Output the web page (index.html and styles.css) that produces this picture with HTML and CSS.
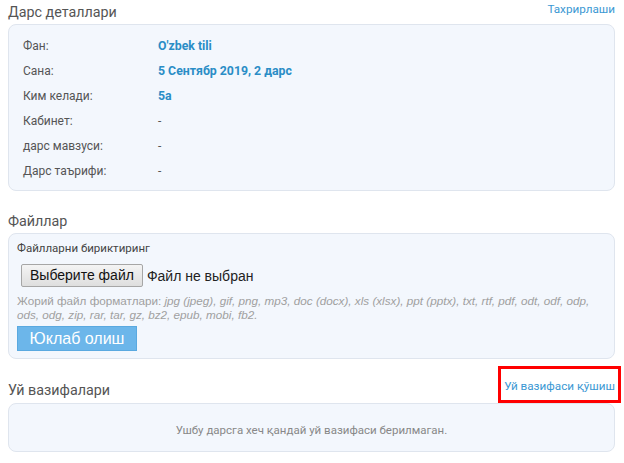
FILE: index.html
```html
<!DOCTYPE html>
<html lang="uz">
<head>
<meta charset="utf-8">
<title>Дарс деталлари</title>
<link rel="stylesheet" href="styles.css">
</head>
<body>
<div class="page">
  <div class="sec-head first">
    <h2 class="sec-title">Дарс деталлари</h2>
    <a class="link edit" href="#">Тахрирлаши</a>
  </div>
  <div class="card details">
    <div class="row"><span class="label">Фан:</span><span class="value strong">O'zbek tili</span></div>
    <div class="row"><span class="label">Сана:</span><span class="value strong">5 Сентябр 2019, 2 дарс</span></div>
    <div class="row"><span class="label">Ким келади:</span><span class="value strong">5a</span></div>
    <div class="row"><span class="label">Кабинет:</span><span class="value">-</span></div>
    <div class="row"><span class="label">дарс мавзуси:</span><span class="value">-</span></div>
    <div class="row"><span class="label">Дарс таърифи:</span><span class="value">-</span></div>
  </div>

  <div class="sec-head">
    <h2 class="sec-title">Файллар</h2>
  </div>
  <div class="card files">
    <div class="files-label">Файлларни бириктиринг</div>
    <div class="file-input">
      <span class="file-btn">Выберите файл</span>
      <span class="file-status">Файл не выбран</span>
    </div>
    <p class="formats">Жорий файл форматлари: <i>jpg (jpeg), gif, png, mp3, doc (docx), xls (xlsx), ppt (pptx), txt, rtf, pdf, odt, odf, odp, ods, odg, zip, rar, tar, gz, bz2, epub, mobi, fb2.</i></p>
    <button class="upload" type="button">Юклаб олиш</button>
  </div>

  <div class="sec-head hw">
    <h2 class="sec-title">Уй вазифалари</h2>
    <span class="highlight"><a class="link" href="#">Уй вазифаси қўшиш</a></span>
  </div>
  <div class="card empty">Ушбу дарсга хеч қандай уй вазифаси берилмаган.</div>
</div>
</body>
</html>
```
FILE: styles.css
```css
* { box-sizing: border-box; }
html, body { margin: 0; padding: 0; background: #fff; }
body { font-family: Roboto, "Liberation Sans", Arial, sans-serif; color: #555; }
.page { padding: 0 9px 0 8px; }

.sec-head {
  display: flex;
  justify-content: space-between;
  align-items: flex-end;
  margin-top: 18px;
  height: 24px;
}
.sec-head.first { margin-top: 0; height: 24px; align-items: flex-start; }
.sec-title {
  margin: 0;
  font-size: 14.3px;
  font-weight: 400;
  color: #555;
  line-height: 24px;
}
.sec-head.hw { margin-top: 9px; height: 35px; }
.sec-head.hw .sec-title { line-height: 24px; margin-bottom: 1px; }

.link { color: #3b98d3; text-decoration: none; font-size: 11.7px; }
.edit { line-height: 18px; }

.card {
  background: #f3f7fd;
  border: 1px solid #dfe5ee;
  border-radius: 8px;
}

.details { padding: 8px 14px 7px; }
.row { display: flex; height: 25px; align-items: center; font-size: 12px; }
.label { width: 135px; color: #555; }
.value { color: #555; }
.value.strong { color: #2a8dc6; font-weight: 700; font-size: 12.3px; }

.files { padding: 6px 8px 7px; }
.files-label { font-size: 11.5px; color: #444; line-height: 16px; }
.file-input {
  display: flex;
  align-items: center;
  margin: 8px 0 0 4px;
  font-family: "Liberation Sans", Arial, sans-serif;
  font-size: 14px;
  color: #222;
}
.file-btn {
  display: inline-block;
  height: 23px;
  line-height: 21px;
  padding: 0 8px;
  border: 1px solid #a6a6a6;
  border-radius: 2px;
  background: linear-gradient(#f4f4f4, #dedede);
  color: #111;
}
.file-status { margin-left: 4px; }
.formats {
  margin: 7px 0 0;
  font-family: "Liberation Sans", Arial, sans-serif;
  font-size: 11.7px;
  line-height: 14px;
  color: #a0a0a0;
}
.upload {
  display: block;
  margin-top: 4px;
  width: 120px;
  height: 25px;
  padding: 0;
  border: 1px solid #5aa9e0;
  background: #6cb6ea;
  color: #fff;
  font-family: "Liberation Sans", Arial, sans-serif;
  font-size: 16px;
  line-height: 23px;
  text-align: center;
}

.highlight {
  display: inline-block;
  border: 3px solid #f00;
  padding: 7px 3px 5px 3px;
  margin-right: -6px;
  line-height: 17px;
}

.empty {
  height: 49px;
  display: flex;
  align-items: center;
  justify-content: center;
  font-size: 11.5px;
  color: #888;
  padding-top: 4px;
}
```
